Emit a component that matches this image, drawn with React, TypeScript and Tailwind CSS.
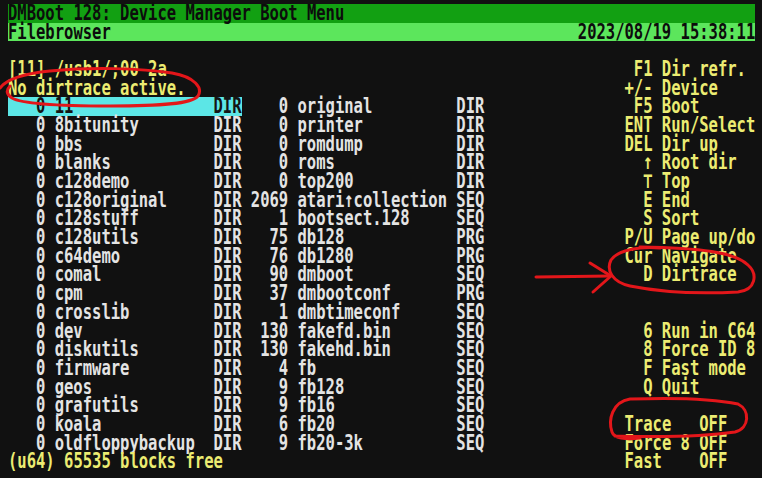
import type { ReactNode } from 'react'

type Entry = { blocks: string; name: string; type: string }

const left: Entry[] = [
  { blocks: '0', name: '11', type: 'DIR' },
  { blocks: '0', name: '8bitunity', type: 'DIR' },
  { blocks: '0', name: 'bbs', type: 'DIR' },
  { blocks: '0', name: 'blanks', type: 'DIR' },
  { blocks: '0', name: 'c128demo', type: 'DIR' },
  { blocks: '0', name: 'c128original', type: 'DIR' },
  { blocks: '0', name: 'c128stuff', type: 'DIR' },
  { blocks: '0', name: 'c128utils', type: 'DIR' },
  { blocks: '0', name: 'c64demo', type: 'DIR' },
  { blocks: '0', name: 'comal', type: 'DIR' },
  { blocks: '0', name: 'cpm', type: 'DIR' },
  { blocks: '0', name: 'crosslib', type: 'DIR' },
  { blocks: '0', name: 'dev', type: 'DIR' },
  { blocks: '0', name: 'diskutils', type: 'DIR' },
  { blocks: '0', name: 'firmware', type: 'DIR' },
  { blocks: '0', name: 'geos', type: 'DIR' },
  { blocks: '0', name: 'grafutils', type: 'DIR' },
  { blocks: '0', name: 'koala', type: 'DIR' },
  { blocks: '0', name: 'oldfloppybackup', type: 'DIR' },
]

const right: Entry[] = [
  { blocks: '0', name: 'original', type: 'DIR' },
  { blocks: '0', name: 'printer', type: 'DIR' },
  { blocks: '0', name: 'romdump', type: 'DIR' },
  { blocks: '0', name: 'roms', type: 'DIR' },
  { blocks: '0', name: 'top200', type: 'DIR' },
  { blocks: '2069', name: 'atari\u2191collection', type: 'SEQ' },
  { blocks: '1', name: 'bootsect.128', type: 'SEQ' },
  { blocks: '75', name: 'db128', type: 'PRG' },
  { blocks: '76', name: 'db1280', type: 'PRG' },
  { blocks: '90', name: 'dmboot', type: 'SEQ' },
  { blocks: '37', name: 'dmbootconf', type: 'PRG' },
  { blocks: '1', name: 'dmbtimeconf', type: 'SEQ' },
  { blocks: '130', name: 'fakefd.bin', type: 'SEQ' },
  { blocks: '130', name: 'fakehd.bin', type: 'SEQ' },
  { blocks: '4', name: 'fb', type: 'SEQ' },
  { blocks: '9', name: 'fb128', type: 'SEQ' },
  { blocks: '9', name: 'fb16', type: 'SEQ' },
  { blocks: '6', name: 'fb20', type: 'SEQ' },
  { blocks: '9', name: 'fb20-3k', type: 'SEQ' },
]

// key, description ('' = empty line)
const menu: [string, string][] = [
  ['', ''],
  ['F1', 'Dir refr.'],
  ['+/-', 'Device'],
  ['F5', 'Boot'],
  ['ENT', 'Run/Select'],
  ['DEL', 'Dir up'],
  ['\u2191', 'Root dir'],
  ['\u22a4', 'Top'],
  ['E', 'End'],
  ['S', 'Sort'],
  ['P/U', 'Page up/do'],
  ['Cur', 'Navigate'],
  ['D', 'Dirtrace'],
  ['', ''],
  ['', ''],
  ['6', 'Run in C64'],
  ['8', 'Force ID 8'],
  ['F', 'Fast mode'],
  ['Q', 'Quit'],
  ['', ''],
]

const status = ['Trace   OFF', 'Force 8 OFF', 'Fast    OFF']

// text stretched vertically like the tall 80 column C128 charset
function T({ children, className = '' }: { children?: ReactNode; className?: string }) {
  return <span className={`inline-block scale-y-[1.38] whitespace-pre leading-[13px] ${className}`}>{children}</span>
}

function FileCell({ e, selected }: { e: Entry; selected?: boolean }) {
  return (
    <div className={`flex h-full w-[25ch] items-center ${selected ? 'bg-[#5ce6e6] text-[#141414]' : ''}`}>
      <T className="w-[4ch] text-right">{e.blocks}</T>
      <T className="ml-[1ch] w-[17ch]">{e.name}</T>
      <T>{e.type}</T>
    </div>
  )
}

export default function App() {
  return (
    <div className="relative h-[478px] w-[762px] overflow-hidden bg-[#111111] pl-[8px] pt-[4px] font-['DejaVu_Sans_Mono','Liberation_Mono',monospace] text-[15.53px] font-bold leading-[18.7px]">
      <div className="flex w-[80ch] flex-col">
        <div className="flex h-[18.7px] items-center bg-[#12a012] text-[#0c0c0c]">
          <T>DMBoot 128: Device Manager Boot Menu</T>
        </div>
        <div className="flex h-[18.7px] items-center justify-between bg-[#5ce65c] text-[#0c0c0c]">
          <T>Filebrowser</T>
          <T>2023/08/19 15:38:11</T>
        </div>

        <div className="flex">
          <div className="flex w-[52ch] flex-col">
            <div className="h-[18.7px]" />
            <div className="flex h-[18.7px] items-center text-[#ecec72]">
              <T>[11] /usb1/;00 2a</T>
            </div>
            <div className="flex h-[18.7px] items-center text-[#ecec72]">
              <T>No dirtrace active.</T>
            </div>
            {left.map((e, i) => (
              <div key={e.name} className="flex h-[18.7px] items-center text-[#e4e4e4]">
                <FileCell e={e} selected={i === 0} />
                <div className="w-[1ch]" />
                <FileCell e={right[i]} />
              </div>
            ))}
            <div className="flex h-[18.7px] items-center text-[#ecec72]">
              <T>(u64) 65535 blocks free</T>
            </div>
          </div>

          <div className="flex-1" />

          <div className="flex w-[14ch] flex-col text-[#ecec72]">
            {menu.map(([k, d], i) => (
              <div key={i} className="flex h-[18.7px] items-center">
                <T className="w-[3ch] text-right">{k}</T>
                <T className="ml-[1ch]">{d}</T>
              </div>
            ))}
            {status.map((s) => (
              <div key={s} className="flex h-[18.7px] items-center">
                <T>{s}</T>
              </div>
            ))}
          </div>
        </div>
      </div>

      {/* red marker scribbles on top of the screenshot */}
      <svg className="pointer-events-none absolute inset-0" width="762" height="478" viewBox="0 0 762 478" fill="none" stroke="#e3161a" strokeWidth="3" strokeLinecap="round" strokeLinejoin="round">
        <path d="M0,88 C6,80 20,74 50,71 C90,67 140,68 172,73 C195,77 203,88 198,96 C192,104 160,106 110,106 C60,106 22,104 12,98 C6,94 6,90 10,86" />
        <path d="M660,248 C640,246 618,250 611,260 C606,270 612,282 630,286 C660,292 700,294 738,292 C756,290 758,274 748,265 C735,252 700,248 640,247" />
        <path d="M536,277 L610,276" />
        <path d="M590,263 L611,276 L593,292" />
        <path d="M615,436 C650,437 700,437 735,432 C750,428 750,410 738,404 C710,398 660,398 630,399 C612,402 608,420 612,432 C614,438 625,440 640,438" />
      </svg>
    </div>
  )
}
